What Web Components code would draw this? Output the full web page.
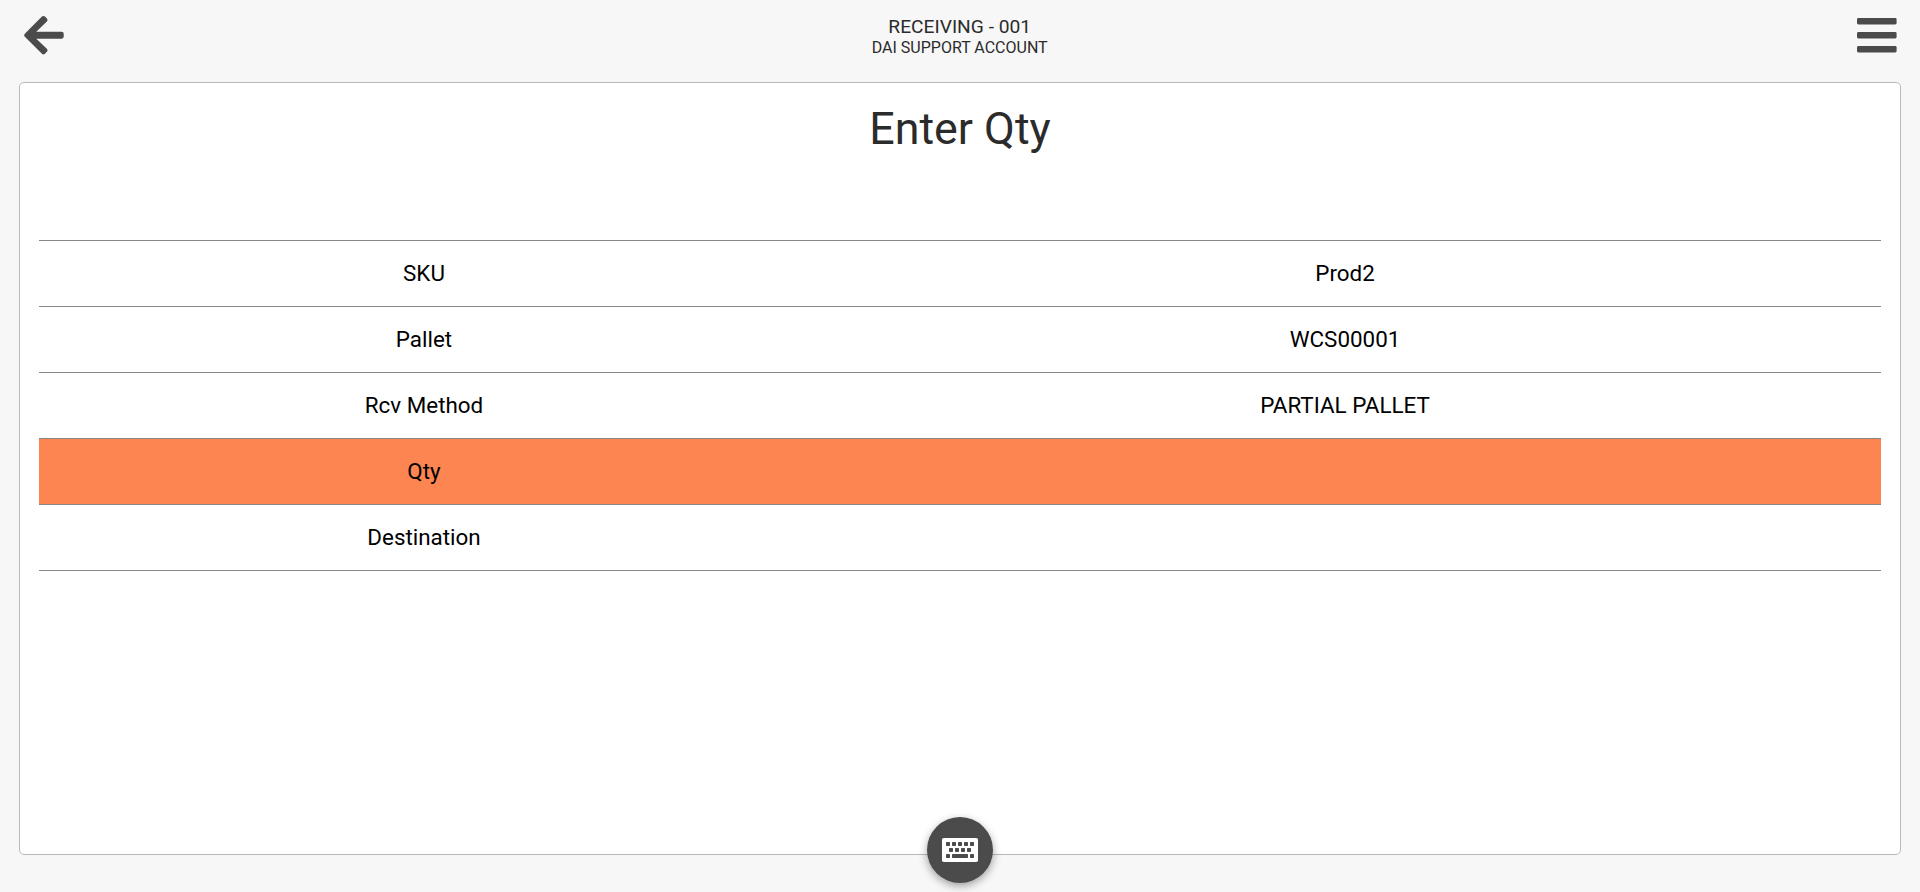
<!DOCTYPE html>
<html lang="en">
<head>
<meta charset="utf-8">
<title>Receiving</title>
<style>
html, body { margin: 0; height: 100%; }
body { background: #f7f7f7; font-family: Roboto, sans-serif; color: #2b2b2b; overflow: hidden; }
</style>
</head>
<body>
<scan-app></scan-app>
<script>
const define = (name, html) => {
  const template = document.createElement('template');
  template.innerHTML = html;
  customElements.define(name, class extends HTMLElement {
    constructor() {
      super();
      this.attachShadow({ mode: 'open' }).append(template.content.cloneNode(true));
    }
  });
};

define('back-button', `
<style>
:host { display: block; width: 40px; height: 46px; color: #4b4b4b; }
svg { display: block; width: 40px; height: 46px; }
</style>
<svg viewBox="0 0 40 46" fill="currentColor"><path transform="translate(.2 .6) scale(.0882)" d="M257.5 445.1l-22.2 22.2c-9.4 9.4-24.6 9.4-33.9 0L7 273c-9.4-9.4-9.4-24.6 0-33.9L201.4 44.7c9.4-9.4 24.6-9.4 33.9 0l22.2 22.2c9.5 9.5 9.3 25-.4 34.3L136.6 216H424c13.3 0 24 10.7 24 24v32c0 13.3-10.7 24-24 24H136.6l120.5 114.8c9.8 9.3 10 24.8.4 34.3z"/></svg>`);

define('menu-button', `
<style>
:host { display: block; width: 40px; height: 40px; padding-top: 6px; color: #4b4b4b; }
svg { display: block; width: 40px; height: 36px; }
</style>
<svg viewBox="0 0 40 36" fill="currentColor">
  <rect width="39.6" height="6.4" rx="1.4"/>
  <rect y="14" width="39.6" height="6.4" rx="1.4"/>
  <rect y="28" width="39.6" height="6.4" rx="1.4"/>
</svg>`);

define('app-header', `
<style>
:host { display: flex; justify-content: space-between; box-sizing: border-box; height: 82px; padding: 12px 23px 0 24px; }
.titles { padding-top: 4px; margin-right: 1.6px; text-align: center; }
.title { font-size: 19.2px; line-height: 22px; }
.account { font-size: 16px; line-height: 20px; }
</style>
<back-button></back-button>
<div class="titles">
  <div class="title"><slot name="title"></slot></div>
  <div class="account"><slot name="account"></slot></div>
</div>
<menu-button></menu-button>`);

define('prompt-card', `
<style>
:host { display: block; box-sizing: border-box; height: 773px; margin: 0 19px; padding: 0 19px; background: #fff; border: 1px solid #b9b9b9; border-radius: 5px; }
h1 { margin: 0; padding-top: 19px; height: 138px; font-size: 44.8px; line-height: 54px; font-weight: 400; text-align: center; }
</style>
<h1><slot name="heading"></slot></h1>
<slot></slot>`);

define('detail-list', `
<style>
:host { display: block; border-top: 1px solid #888; }
</style>
<slot></slot>`);

define('detail-row', `
<style>
:host { display: grid; grid-template-columns: 770px 1fr; height: 65px; border-bottom: 1px solid #888; color: #000; font-size: 22.4px; line-height: 65px; text-align: center; }
:host([active]) { background: #fd8551; }
</style>
<div><slot></slot></div>
<div><slot name="value"></slot></div>`);

define('keyboard-button', `
<style>
:host { position: absolute; left: calc(50% - 33px); bottom: 9px; width: 66px; height: 66px; border-radius: 50%; background: #4b4b4b; box-shadow: 0 3px 8px rgba(0,0,0,.36); display: flex; align-items: center; justify-content: center; }
svg { display: block; width: 36px; height: 24px; }
</style>
<svg viewBox="0 0 36 24">
  <rect width="36" height="24" rx="1.8" fill="#fff"/>
  <g fill="#4b4b4b">
    <rect x="4" y="4" width="4" height="4" rx=".7"/><rect x="10" y="4" width="4" height="4" rx=".7"/><rect x="16" y="4" width="4" height="4" rx=".7"/><rect x="22" y="4" width="4" height="4" rx=".7"/><rect x="28" y="4" width="4" height="4" rx=".7"/>
    <rect x="7" y="10" width="4" height="4" rx=".7"/><rect x="13" y="10" width="4" height="4" rx=".7"/><rect x="19" y="10" width="4" height="4" rx=".7"/><rect x="25" y="10" width="4" height="4" rx=".7"/>
    <rect x="4" y="16" width="4" height="4" rx=".7"/><rect x="10" y="16" width="16" height="4" rx=".7"/><rect x="28" y="16" width="4" height="4" rx=".7"/>
  </g>
</svg>`);

define('scan-app', `
<style>
:host { display: block; position: relative; height: 892px; }
</style>
<app-header>
  <span slot="title">RECEIVING - 001</span>
  <span slot="account">DAI SUPPORT ACCOUNT</span>
</app-header>
<prompt-card>
  <span slot="heading">Enter Qty</span>
  <detail-list>
    <detail-row>SKU<span slot="value">Prod2</span></detail-row>
    <detail-row>Pallet<span slot="value">WCS00001</span></detail-row>
    <detail-row>Rcv Method<span slot="value">PARTIAL PALLET</span></detail-row>
    <detail-row active>Qty</detail-row>
    <detail-row>Destination</detail-row>
  </detail-list>
</prompt-card>
<keyboard-button></keyboard-button>`);
</script>
</body>
</html>
